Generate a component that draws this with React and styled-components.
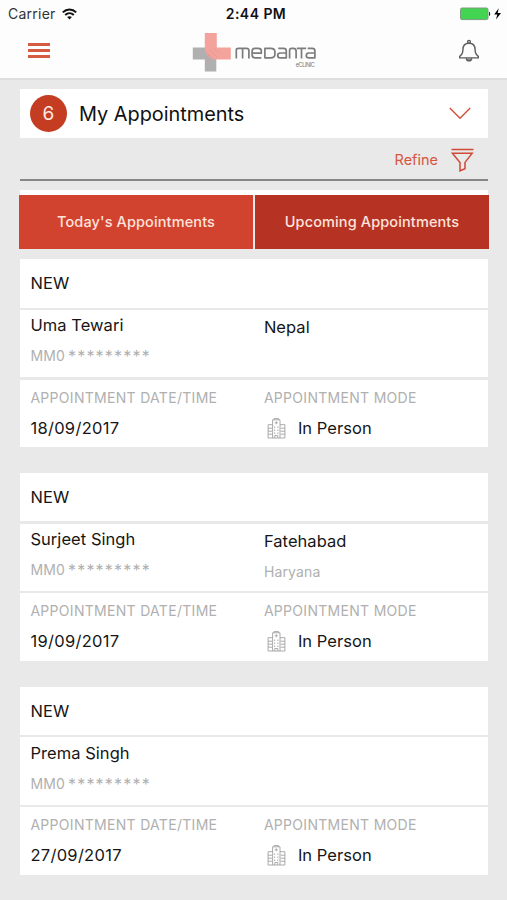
import React from "react";
import styled, { createGlobalStyle } from "styled-components";

const appointments = [
    { id: 1, name: "Uma Tewari", city: "Nepal", date: "18/09/2017" },
    { id: 2, name: "Surjeet Singh", city: "Fatehabad", region: "Haryana", date: "19/09/2017" },
    { id: 3, name: "Prema Singh", date: "27/09/2017" },
];

const Wifi = () => (
    <svg width="15" height="12" viewBox="0 0 15 12" fill="none" stroke="#111" strokeWidth="2">
        <path d="M0.8 4.4C4.6 0.6 10.4 0.6 14.2 4.4" />
        <path d="M3.2 7C5.7 4.6 9.3 4.6 11.8 7" />
        <path d="M7.5 11.5L5.1 9.1C6.5 7.8 8.5 7.8 9.9 9.1Z" fill="#111" stroke="none" />
    </svg>
);

const Battery = () => (
    <svg width="42" height="14" viewBox="0 0 42 14">
        <rect x="0.5" y="1" width="27.5" height="11.6" rx="1.5" fill="#43d551" stroke="#7d9b80" />
        <path d="M29 4.8C30.6 5.2 30.6 8.6 29 9Z" fill="#222" />
        <path d="M38.7 1.2L34.2 7.5H37.3L36 12.6L41 5.9H37.7Z" fill="#000" />
    </svg>
);

const Bell = () => (
    <svg width="22" height="24" viewBox="0 0 22 24" fill="none" stroke="#5c5c5c" strokeWidth="1.4">
        <circle cx="11" cy="2.8" r="1.4" />
        <path d="M11 4.2C6.7 4.2 4.9 7.4 4.9 10.8C4.9 14.6 3.8 16 1.7 17.3V18.9H20.3V17.3C18.2 16 17.1 14.6 17.1 10.8C17.1 7.4 15.3 4.2 11 4.2Z" />
        <path d="M8.3 19.2C8.5 22.8 13.5 22.8 13.7 19.2" fill="#888" />
    </svg>
);

const Logo = () => (
    <svg width="126" height="42" viewBox="-1.3 0 126 42">
        <path d="M0.5 15.5H13L24 26.5V39.5H12.5V27.5H0.5Z" fill="#b0b0b0" />
        <path d="M12.5 1H24.5V15.5H38.5V27.5H24C18 27.5 12.5 22 12.5 16Z" fill="#f3a39c" />
        <path d="M14 20L19.5 26M16.5 17L25 25.5M20 15L27 21M13 26L17 23M14 29L19 26.5" stroke="#dc8f88" strokeWidth="0.5" fill="none" />
        <g fill="none" stroke="#7c7c7c" strokeWidth="1.7" strokeLinejoin="round">
            <path d="M44 26.6V18Q44 16.4 46 16.4H54Q56.6 16.4 56.6 18.6V26.6M50.3 16.4V26.6" />
            <path d="M69 25.8H62.5Q59.8 25.8 59.8 22.8V19.5Q59.8 16.4 62.5 16.4H66Q69 16.4 69 19V21.2H59.8" />
            <path d="M72.6 16.4H78.5Q82.6 16.4 82.6 20V22.2Q82.6 25.8 78.5 25.8H72.6Z" />
            <path d="M86 16.4H91.4Q94 16.4 94 19V25.8H88Q85.4 25.8 85.4 23.4Q85.4 21 88 21H94" />
            <path d="M97.3 26.6V18.2Q97.3 16.4 99.3 16.4H101Q103.8 16.4 103.8 19V26.6" />
            <path d="M104.6 16.4H113.8M109.2 16.4V26.6" />
            <path d="M115.4 16.4H120Q122.6 16.4 122.6 19V25.8H116.6Q114 25.8 114 23.4Q114 21 116.6 21H122.6" />
        </g>
        <text x="103.5" y="35" fontFamily="Inter, sans-serif" fontSize="5.5" textLength="19" fill="#777">eCLINIC</text>
    </svg>
);

const Chevron = () => (
    <svg width="22" height="13" viewBox="0 0 22 13" fill="none" stroke="#d5523e" strokeWidth="1.5">
        <path d="M0.8 1L11 11.2L21.2 1" />
    </svg>
);

const Funnel = () => (
    <svg width="23" height="24" viewBox="0 0 23 24" fill="none" stroke="#d04a36" strokeWidth="1.5">
        <path d="M0.5 1.5H22.5" />
        <path d="M1.4 5.2H21.2L14 14.4V20.8L9 22.8V14.4Z" />
    </svg>
);

const Building = () => (
    <svg width="19" height="21" viewBox="0 0 19 21" fill="none" stroke="#a0a0a0" strokeWidth="0.9">
        <path d="M5.6 20V1.8H13V20M5.6 6.7H1.1V20H17.9V6.7H13M7 1.8V0.6H11.6V1.8" />
        <path d="M1.1 10.2H5M1.1 13.2H5M1.1 16.2H5M13.6 10.2H17.9M13.6 13.2H17.9M13.6 16.2H17.9M9.3 3.3V6.3M7.8 4.8H10.8" />
        <path d="M7.7 8.5V17M10.9 8.5V17" strokeDasharray="1.5 1.5" />
        <path d="M7.8 20V17.5H10.8V20" />
    </svg>
);

const AppointmentCard = ({ item }) => (
    <Card>
        <CardHead>
            <Value>NEW</Value>
        </CardHead>
        <Patient>
            <Column>
                <Value>{item.name}</Value>
                <Muted>MM0 <Stars>*********</Stars></Muted>
            </Column>
            <Place>
                <Value>{item.city}</Value>
                <Muted>{item.region}</Muted>
            </Place>
        </Patient>
        <Details>
            <Column>
                <Label>APPOINTMENT DATE/TIME</Label>
                <Value $spacing="0.3px">{item.date}</Value>
            </Column>
            <Column>
                <Label>APPOINTMENT MODE</Label>
                <Mode>
                    <Building />
                    <Value>In Person</Value>
                </Mode>
            </Column>
        </Details>
    </Card>
);

const App = () => {
    return (
        <Screen>
            <GlobalStyle />
            <Header>
                <StatusBar>
                    <Carrier>
                        <span>Carrier</span>
                        <Wifi />
                    </Carrier>
                    <Time>2:44 PM</Time>
                    <Power>
                        <Battery />
                    </Power>
                </StatusBar>
                <NavBar>
                    <Menu>
                        <Line />
                        <Line />
                        <Line />
                    </Menu>
                    <Logo />
                    <BellButton>
                        <Bell />
                    </BellButton>
                </NavBar>
            </Header>
            <Content>
                <Title>
                    <Count>6</Count>
                    <h1>My Appointments</h1>
                    <Chevron />
                </Title>
                <Refine>
                    <span>Refine</span>
                    <Funnel />
                </Refine>
                <Strip />
                <Tabs>
                    <Tab>Today's Appointments</Tab>
                    <Tab $active>Upcoming Appointments</Tab>
                </Tabs>
                <List>
                    {appointments.map((item) => (
                        <AppointmentCard key={item.id} item={item} />
                    ))}
                </List>
            </Content>
        </Screen>
    );
};

export default App;

const GlobalStyle = createGlobalStyle`
    * {
        box-sizing: border-box;
    }
    body {
        margin: 0;
        background: #e9e9e9;
        font-family: Inter, "Liberation Sans", sans-serif;
    }
    svg {
        display: block;
        flex-shrink: 0;
    }
`;
const Screen = styled.div`
    width: 507px;
    height: 900px;
    overflow: hidden;
    background: #e9e9e9;
    color: #161616;
`;
const Header = styled.header`
    height: 80px;
    background: #fdfdfd;
    border-bottom: 2px solid #dedede;
`;
const StatusBar = styled.div`
    display: grid;
    grid-template-columns: 1fr auto 1fr;
    align-items: center;
    height: 27px;
    padding: 0 5px 0 8px;
    font-size: 14px;
`;
const Carrier = styled.div`
    display: flex;
    align-items: center;
    gap: 6px;
    letter-spacing: 0.25px;
    color: #333;
`;
const Time = styled.div`
    padding-left: 2px;
    font-weight: 600;
    letter-spacing: 0.45px;
    color: #111;
`;
const Power = styled.div`
    display: flex;
    justify-content: flex-end;
`;
const NavBar = styled.div`
    display: flex;
    align-items: flex-start;
    justify-content: space-between;
    padding: 5px 27px 0 28px;
`;
const Menu = styled.div`
    display: flex;
    flex-direction: column;
    gap: 3px;
    width: 22px;
    padding-top: 11px;
`;
const Line = styled.span`
    height: 3px;
    background: #d65b43;
`;
const BellButton = styled.div`
    padding-top: 7px;
`;
const Content = styled.main`
    padding: 9px 18px 0 19px;
`;
const Title = styled.div`
    display: flex;
    align-items: center;
    height: 49px;
    margin: 0 1px;
    padding: 0 17px 0 10px;
    background: #fff;
    h1 {
        flex: 1;
        margin: 0 0 0 12px;
        font-size: 19.9px;
        font-weight: 400;
        letter-spacing: -0.02px;
        color: #111;
    }
`;
const Count = styled.div`
    display: flex;
    align-items: center;
    justify-content: center;
    width: 37px;
    height: 37px;
    border-radius: 50%;
    background: #c43d22;
    color: #ffe9e2;
    font-size: 19px;
`;
const Refine = styled.div`
    display: flex;
    align-items: center;
    justify-content: flex-end;
    gap: 13px;
    height: 43px;
    margin: 0 1px;
    padding: 2px 14px 0 0;
    border-bottom: 2px solid #858885;
    color: #d65540;
    font-size: 14.5px;
`;
const Strip = styled.div`
    height: 5px;
    margin: 9px 1px 0;
    background: #fff;
`;
const Tabs = styled.div`
    display: grid;
    grid-template-columns: 234px 234px;
    gap: 2px;
    height: 54px;
`;
const Tab = styled.div`
    display: flex;
    align-items: center;
    justify-content: center;
    padding-bottom: 1px;
    background: ${({ $active }) => ($active ? "#b63324" : "#d1422f")};
    color: #ffe3dc;
    font-size: 14.5px;
    font-weight: 500;
    letter-spacing: 0.12px;
`;
const List = styled.div`
    display: flex;
    flex-direction: column;
    gap: 25.75px;
    padding: 10px 1px 0;
`;
const Card = styled.section`
    display: grid;
    grid-template-rows: 48.5px 67.5px 67.5px;
    gap: 2.25px;
    height: 188px;
`;
const CardHead = styled.div`
    display: flex;
    align-items: center;
    padding: 1px 0 0 10.5px;
    background: #fff;
`;
const Patient = styled.div`
    display: grid;
    grid-template-columns: 233.5px 1fr;
    padding: 5.3px 0 0 10.4px;
    background: #fff;
`;
const Details = styled(Patient)`
    padding-top: 8.2px;
`;
const Column = styled.div`
    display: flex;
    flex-direction: column;
    gap: 10px;
`;
const Place = styled(Column)`
    padding-top: 2px;
`;
const Value = styled.div`
    font-size: 16.5px;
    line-height: 21px;
    letter-spacing: ${({ $spacing }) => $spacing || "0.05px"};
`;
const Muted = styled.div`
    display: flex;
    gap: 3px;
    font-size: 14px;
    line-height: 20px;
    letter-spacing: 0.15px;
    color: #b0b0b0;
`;
const Stars = styled.span`
    font-size: 16px;
    letter-spacing: 1.2px;
`;
const Label = styled.div`
    font-size: 14px;
    line-height: 20px;
    letter-spacing: 0.3px;
    color: #b0b0b0;
`;
const Mode = styled.div`
    display: flex;
    align-items: center;
    gap: 12px;
    padding-left: 3px;
`;
